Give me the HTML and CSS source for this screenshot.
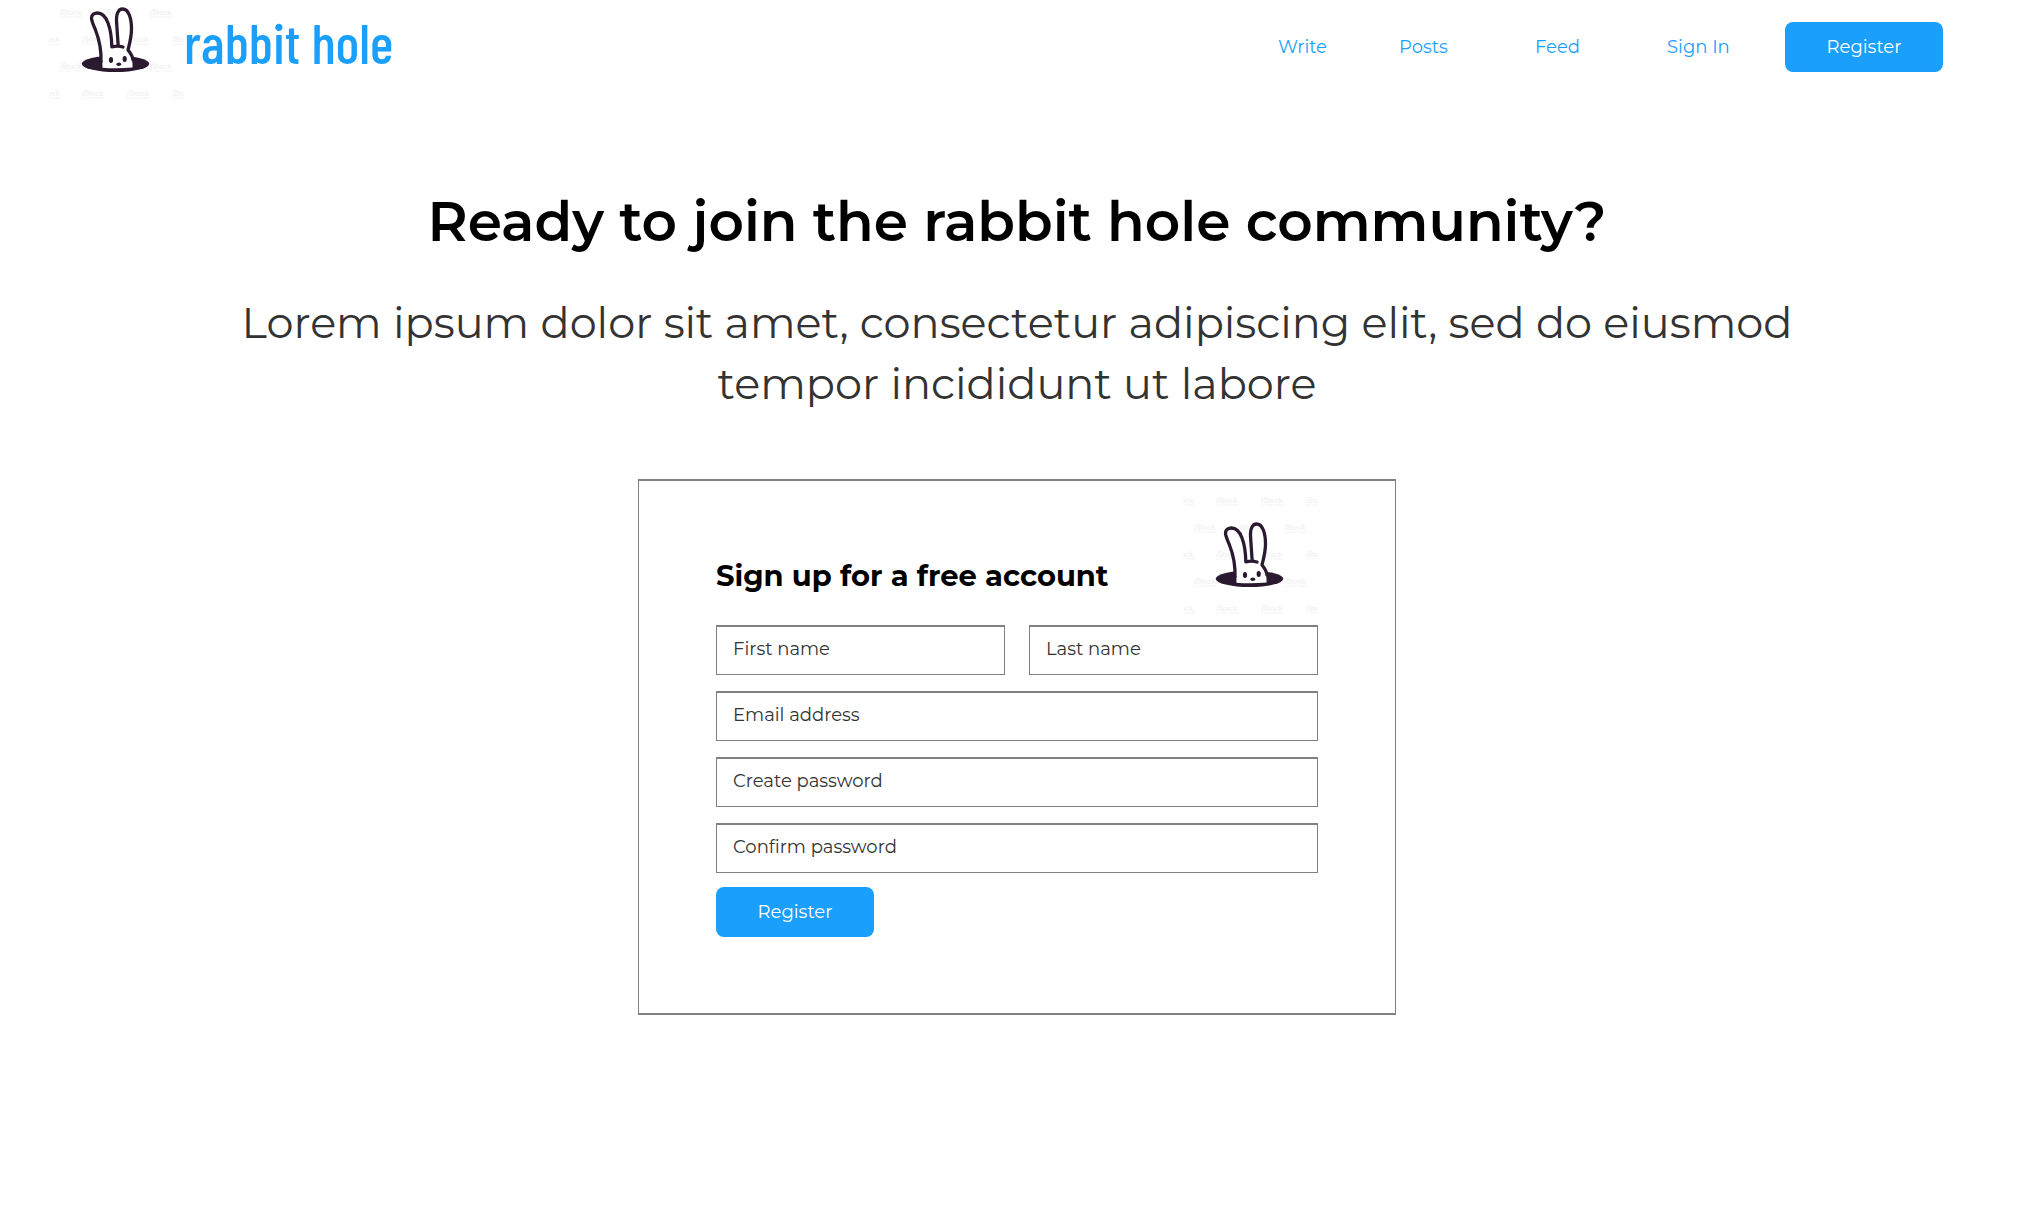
FILE: index.html
```html
<!DOCTYPE html>
<html lang="en">
<head>
<meta charset="utf-8">
<meta name="viewport" content="width=device-width, initial-scale=1">
<title>rabbit hole</title>
<link rel="stylesheet" href="styles.css">
</head>
<body>
<svg class="sprite" aria-hidden="true">
  <defs>
    <g id="stamp">
      <text class="stamp-name" y="8">iStock</text>
      <text class="stamp-by" y="11">by Getty Images</text>
    </g>
    <g id="edge-row">
      <use href="#stamp" x="-11"/><use href="#stamp" x="33"/><use href="#stamp" x="78"/><use href="#stamp" x="123"/>
    </g>
    <g id="inner-row">
      <use href="#stamp" x="11"/><use href="#stamp" x="56"/><use href="#stamp" x="101"/>
    </g>
    <symbol id="rabbit" viewBox="0 0 135 120">
      <g class="watermark">
        <use href="#edge-row" y="1"/><use href="#inner-row" y="28"/><use href="#edge-row" y="55"/><use href="#inner-row" y="82"/><use href="#edge-row" y="109"/>
      </g>
      <ellipse cx="66.5" cy="84.8" rx="33.8" ry="8.2" fill="#2b1a2f"/>
      <path d="M53.5 88.8C53.5 74 50 60 46.5 51C44 45 42.5 42 42.5 39C42.5 35.5 45.5 34 48.5 34C58 34 62 50 62.8 67.5L69.2 67L67.7 45C66.5 34 70 30 73.5 30C80 30 82.5 40 82.5 50C82.5 58 80.5 65 79 71C82 75 84 80 83.5 88.5Q68 90 53.5 88.8Z" fill="#fff"/>
      <path d="M52 83C52.5 70 50 60 46.5 51C44 45 42.5 42 42.5 39C42.5 35.5 45.5 34 48.5 34C58 34 62.5 50 62.8 67.8Q69 66.5 74 68M69.2 67L67.7 45C66.5 34 70 30 73.5 30C80 30 82.5 40 82.5 50C82.5 58 80.5 65 79 71C81.5 74 83.5 77 84 81" fill="none" stroke="#2b1a2f" stroke-width="3.3" stroke-linecap="round" stroke-linejoin="round"/>
      <ellipse cx="62" cy="81" rx="2.1" ry="2.9" fill="#2b1a2f"/>
      <ellipse cx="75.7" cy="80" rx="2.1" ry="2.9" fill="#2b1a2f"/>
      <ellipse cx="69.8" cy="85.2" rx="2.4" ry="1.7" fill="#2b1a2f"/>
    </symbol>
  </defs>
</svg>
<header class="site-header">
  <a class="brand" href="#">
    <svg class="brand-logo" viewBox="0 21 135 100" aria-hidden="true"><use href="#rabbit" width="135" height="120"/></svg>
    <span class="brand-name">rabbit hole</span>
  </a>
  <nav class="site-nav">
    <a href="#">Write</a>
    <a href="#">Posts</a>
    <a href="#">Feed</a>
    <a href="#">Sign In</a>
    <button class="button" type="button">Register</button>
  </nav>
</header>
<main class="content">
  <h1 class="headline">Ready to join the rabbit hole community?</h1>
  <p class="intro">Lorem ipsum dolor sit amet, consectetur adipiscing elit, sed do eiusmod tempor incididunt ut labore</p>
  <form class="card">
    <div class="card-head">
      <h2 class="card-title">Sign up for a free account</h2>
      <svg class="card-logo" viewBox="0 0 135 120" aria-hidden="true"><use href="#rabbit" width="135" height="120"/></svg>
    </div>
    <div class="fields">
      <input class="field" type="text" placeholder="First name" aria-label="First name">
      <input class="field" type="text" placeholder="Last name" aria-label="Last name">
      <input class="field wide" type="email" placeholder="Email address" aria-label="Email address">
      <input class="field wide" type="password" placeholder="Create password" aria-label="Create password">
      <input class="field wide" type="password" placeholder="Confirm password" aria-label="Confirm password">
    </div>
    <button class="button" type="submit">Register</button>
  </form>
</main>
</body>
</html>
```
FILE: styles.css
```css
* { box-sizing: border-box; }

body {
  margin: 0;
  padding-right: 6px;
  background: #fff;
  color: #000;
  font-family: Montserrat, Inter, sans-serif;
  font-size: 18px;
}

.sprite { position: absolute; width: 0; height: 0; }
.watermark { fill: #f3f3f3; font-family: Inter, sans-serif; }
.stamp-name { font-size: 7px; font-weight: 700; }
.stamp-by { font-size: 3px; }

.site-header {
  display: flex;
  justify-content: space-between;
  align-items: flex-start;
  padding: 0 91px 0 49px;
}

.brand { display: flex; color: #1b9ffc; text-decoration: none; }
.brand-logo { width: 135px; height: 100px; }
.brand-name {
  font-family: "Barlow Condensed", "Roboto Condensed", "Liberation Sans", sans-serif;
  font-size: 56px;
  font-weight: 500;
  line-height: 84px;
}

.site-nav {
  display: grid;
  grid-template-columns: 121px 136px 132px 118px 158px;
  align-items: center;
  padding-top: 22px;
}
.site-nav a { color: #1b9ffc; text-decoration: none; }

.button {
  width: 158px;
  height: 50px;
  border: 0;
  border-radius: 8px;
  background: #1b9ffc;
  color: #fff;
  font: inherit;
}

.content {
  display: flex;
  flex-direction: column;
  align-items: center;
  padding: 84px 24px 48px;
}

.headline {
  margin: 0;
  font-size: 55px;
  font-weight: 600;
  line-height: 76px;
  text-align: center;
}

.intro {
  max-width: 1600px;
  margin: 32px 0 0;
  color: #333;
  font-size: 43px;
  font-weight: 400;
  line-height: 61px;
  text-align: center;
}

.card {
  width: 100%;
  max-width: 758px;
  margin-top: 65px;
  padding: 13px 77px 76px;
  border: 1px solid #808080;
  border-width: 2px 1px;
}

.card-head { display: flex; justify-content: space-between; align-items: center; }
.card-title { margin: 44px 0 0; font-size: 29px; font-weight: 700; line-height: 40px; white-space: nowrap; }
.card-logo { width: 135px; height: 120px; }

.fields {
  display: grid;
  grid-template-columns: 1fr 1fr;
  gap: 16px 24px;
  margin: 11px 0 14px;
}
.field {
  width: 100%;
  height: 50px;
  padding: 0 16px 4px;
  border: 1px solid #808080;
  border-top-width: 2px;
  border-radius: 0;
  background: #fff;
  font: inherit;
}
.field::placeholder { color: #333; opacity: 1; }
.wide { grid-column: 1 / -1; }
```
